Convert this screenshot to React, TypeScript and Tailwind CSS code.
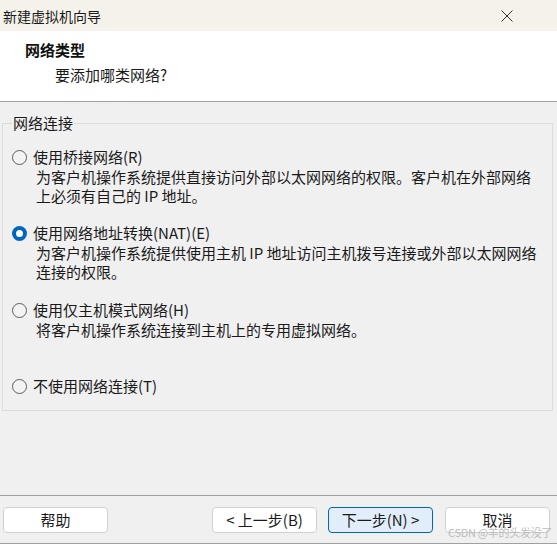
import React from "react";

const font = "font-['Noto_Sans_CJK_SC','Noto_Sans',sans-serif]";

function Radio({ checked }: { checked?: boolean }) {
  if (checked) {
    return (
      <span className="flex h-[15px] w-[15px] shrink-0 items-center justify-center rounded-full bg-[#0067c0]">
        <span className="h-[7px] w-[7px] rounded-full bg-white" />
      </span>
    );
  }
  return <span className="h-[15px] w-[15px] shrink-0 rounded-full border border-[#5c5c5c] bg-[#f3f3f3]" />;
}

function Option({
  label,
  desc,
  checked,
  className,
}: {
  label: string;
  desc?: string[];
  checked?: boolean;
  className?: string;
}) {
  return (
    <div className={className}>
      <div className="flex h-[20px] items-center gap-[6px]">
        <Radio checked={checked} />
        <span className="text-[15px] leading-[20px] text-[#1a1a1a]">{label}</span>
      </div>
      {desc?.map((d) => (
        <div key={d} className="pl-[24px] text-[15px] leading-[19px] text-[#1a1a1a] whitespace-nowrap">
          {d}
        </div>
      ))}
    </div>
  );
}

function Btn({ children, primary, className }: { children: React.ReactNode; primary?: boolean; className?: string }) {
  return (
    <button
      className={
        "flex h-[26px] w-[105px] items-center justify-center rounded-[4px] border text-[15px] leading-[20px] text-[#1a1a1a] " +
        (primary ? "border-[#0067c0] bg-[#e1eefa] " : "border-[#d0d0d0] bg-white ") +
        (className ?? "")
      }
    >
      {children}
    </button>
  );
}

export default function App() {
  return (
    <div className={`relative flex h-[544px] w-[557px] flex-col overflow-hidden bg-[#f0f0f0] ${font}`}>
      {/* Title bar */}
      <div className="flex h-[31px] shrink-0 items-center justify-between bg-[#f5f2eb] pl-[3px] pr-[44px]">
        <span className="text-[14px] leading-[20px] text-[#1a1a1a]">新建虚拟机向导</span>
        <svg width="12" height="12" viewBox="0 0 12 12" className="mt-[1px]">
          <path d="M0.5 0.5 L11.5 11.5 M11.5 0.5 L0.5 11.5" stroke="#333" strokeWidth="1" fill="none" />
        </svg>
      </div>

      {/* Header */}
      <div className="h-[71px] shrink-0 border-b border-[#a0a0a0] bg-white pl-[25px] pt-[9px]">
        <div className="text-[15px] font-bold leading-[20px] text-[#111]">网络类型</div>
        <div className="mt-[5px] pl-[30px] text-[15px] leading-[20px] text-[#1a1a1a]">要添加哪类网络?</div>
      </div>

      {/* Body */}
      <div className="h-[393px] shrink-0 pt-[12px]">
        <fieldset className="ml-[2px] mr-[4px] border border-[#dcdcdc] pb-[14px] pl-[9px]">
          <legend className="px-[1px] text-[15px] leading-[18px] text-[#1a1a1a]">网络连接</legend>
          <Option
            className="mt-[15px]"
            label="使用桥接网络(R)"
            desc={["为客户机操作系统提供直接访问外部以太网网络的权限。客户机在外部网络", "上必须有自己的 IP 地址。"]}
          />
          <Option
            className="mt-[18px]"
            checked
            label="使用网络地址转换(NAT)(E)"
            desc={["为客户机操作系统提供使用主机 IP 地址访问主机拨号连接或外部以太网网络", "连接的权限。"]}
          />
          <Option className="mt-[19px]" label="使用仅主机模式网络(H)" desc={["将客户机操作系统连接到主机上的专用虚拟网络。"]} />
          <Option className="mt-[37px]" label="不使用网络连接(T)" />
        </fieldset>
      </div>

      {/* Footer */}
      <div className="flex h-[49px] shrink-0 items-start border-y border-[#a0a0a0] pl-[3px] pr-[7px] pt-[11px]">
        <Btn>帮助</Btn>
        <div className="flex-1" />
        <Btn>&lt; 上一步(B)</Btn>
        <Btn primary className="ml-[11px]">
          下一步(N) &gt;
        </Btn>
        <Btn className="ml-[12px]">取消</Btn>
      </div>

      <div className="pointer-events-none absolute left-[448px] top-[525px] whitespace-nowrap text-[11px] leading-[14px] tracking-[-0.3px] text-[#b4b4b4]/90">
        CSDN @羊的头发没了
      </div>
    </div>
  );
}
